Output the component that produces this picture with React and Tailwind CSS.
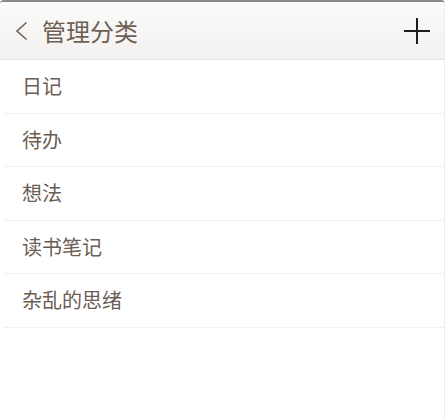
import React from 'react';

const items = ['日记', '待办', '想法', '读书笔记', '杂乱的思绪'];

export default function App() {
  return (
    <div
      className="h-[418px] w-[445px] overflow-hidden bg-white border-r border-[#ececec] border-t-2 border-t-[#8a8a8a] rounded-t-[4px]"
      style={{ fontFamily: '"Noto Sans CJK SC", "Noto Sans", sans-serif' }}
    >
      <div className="flex h-[58px] items-center bg-gradient-to-b from-[#fbfbfb] to-[#f3f1ef] border-b border-[#e6e3e0] pl-[14px] pr-[14px]">
        <svg width="16" height="20" viewBox="0 0 16 20" className="mr-[12px]">
          <path d="M12.5 1.5 L3 10 L12.5 18.5" fill="none" stroke="#6f625a" strokeWidth="1.6" />
        </svg>
        <span className="text-[24px] leading-none text-[#6e5f55]">管理分类</span>
        <svg width="26" height="26" viewBox="0 0 26 26" className="ml-auto">
          <path d="M13 0 V26 M0 13 H26" stroke="#1e1e1e" strokeWidth="2" />
        </svg>
      </div>
      <div className="pl-[4px]">
        {items.map((t) => (
          <div key={t} className="flex h-[53.5px] items-center border-b border-[#f1f1f1] pl-[18px] text-[20px] text-[#6b5d54]">
            {t}
          </div>
        ))}
      </div>
    </div>
  );
}
